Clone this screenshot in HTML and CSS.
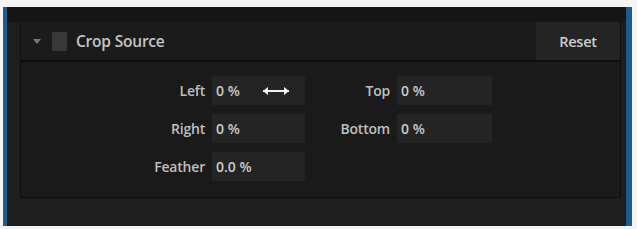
FILE: index.html
```html
<!DOCTYPE html>
<html lang="en">
<head>
    <meta charset="UTF-8">
    <title>Crop Source</title>
    <link rel="stylesheet" href="styles.css">
</head>
<body>
    <div class="window">
        <div class="window-top"></div>

        <div class="panel">
            <div class="panel-header">
                <span class="caret"></span>
                <span class="checkbox"></span>
                <span class="panel-title">Crop Source</span>
                <button class="reset-btn">Reset</button>
            </div>

            <div class="panel-body">
                <div class="field-grid">
                    <label class="field-label">Left</label>
                    <div class="field-input">0 %
                        <svg class="drag-icon" width="28" height="10" viewBox="0 0 28 10">
                            <path d="M1 5 L27 5" stroke="#f2f2f2" stroke-width="2"/>
                            <path d="M1 5 L6 1 L6 9 Z" fill="#f2f2f2"/>
                            <path d="M27 5 L22 1 L22 9 Z" fill="#f2f2f2"/>
                        </svg>
                    </div>
                    <label class="field-label">Top</label>
                    <div class="field-input">0 %</div>

                    <label class="field-label">Right</label>
                    <div class="field-input">0 %</div>
                    <label class="field-label">Bottom</label>
                    <div class="field-input">0 %</div>

                    <label class="field-label">Feather</label>
                    <div class="field-input">0.0 %</div>
                </div>
            </div>
        </div>
    </div>
</body>
</html>
```

FILE: styles.css
```css
body {
  margin: 0;
  background: #f4f4f4;
  font-family: "Open Sans", "Noto Sans", sans-serif;
}

.window {
  margin: 7px 5px 0 3px;
  height: 219px;
  background: #1e1e1e;
  border-left: 4px solid #1d5c8c;
  border-right: 6px solid #1d5c8c;
  box-sizing: border-box;
}

.window-top {
  height: 15px;
  background: #151515;
}

.panel {
  margin: 0 5px 0 13px;
  background: #1a1a1a;
  border: 1px solid #0e0e0e;
  border-top: none;
}

.panel-header {
  display: flex;
  align-items: center;
  height: 38px;
  border-bottom: 2px solid #0f0f0f;
  background: #1b1b1b;
}

.caret {
  width: 0;
  height: 0;
  margin-left: 12px;
  border-left: 4px solid transparent;
  border-right: 4px solid transparent;
  border-top: 5px solid #777;
}

.checkbox {
  width: 15px;
  height: 19px;
  margin-left: 11px;
  background: #383838;
  border-radius: 1px;
}

.panel-title {
  margin-left: 9px;
  color: #c4c4c4;
  font-size: 15.5px;
  font-weight: 600;
  letter-spacing: -0.2px;
}

.reset-btn {
  margin-left: auto;
  width: 84px;
  height: 38px;
  border: none;
  background: #242424;
  color: #cdcdcd;
  font-family: inherit;
  font-size: 14.5px;
  font-weight: 600;
  letter-spacing: -0.3px;
}

.panel-body {
  padding: 14px 0 16px 0;
}

.field-grid {
  display: grid;
  grid-template-columns: 184px 93px 78px 95px;
  column-gap: 7px;
  row-gap: 9px;
}

.field-label {
  display: flex;
  align-items: center;
  justify-content: flex-end;
  color: #bfbfbf;
  font-size: 14px;
  font-weight: 600;
  letter-spacing: -0.2px;
}

.field-input {
  display: flex;
  align-items: center;
  height: 29px;
  padding-left: 4px;
  background: #242424;
  color: #cbcbcb;
  font-size: 14px;
  font-weight: 600;
}

.drag-icon {
  margin-left: 22px;
}
```
